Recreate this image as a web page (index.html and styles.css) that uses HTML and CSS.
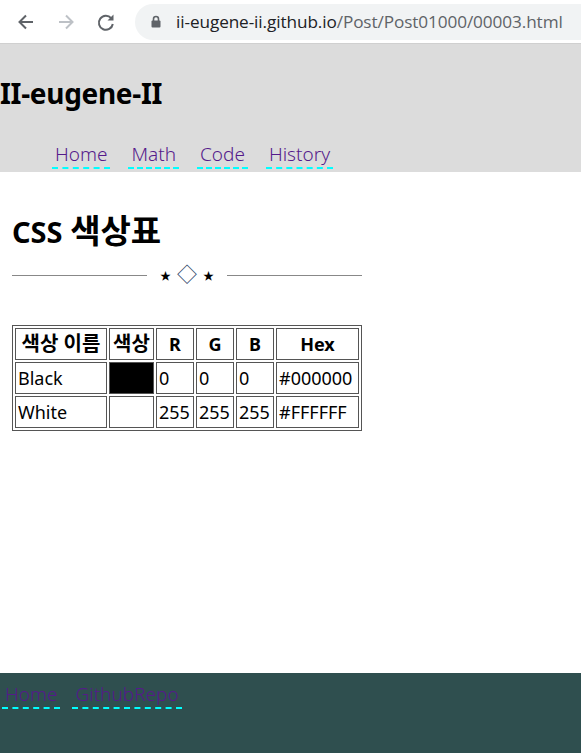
FILE: index.html
```html
<!DOCTYPE html>
<html lang="ko">
<head>
<meta charset="utf-8">
<title>CSS 색상표</title>
<link rel="stylesheet" href="styles.css">
</head>
<body>
<div class="chrome">
  <div class="nav-icons">
    <svg class="ic" width="20" height="20" viewBox="0 0 20 20"><path d="M17 10H4M10 3.5 3.5 10 10 16.5" fill="none" stroke="#5f6368" stroke-width="2"/></svg>
    <svg class="ic" width="20" height="20" viewBox="0 0 20 20"><path d="M3 10h13M10 3.5 16.5 10 10 16.5" fill="none" stroke="#bdc1c6" stroke-width="2"/></svg>
    <svg class="ic" width="20" height="20" viewBox="0 0 20 20"><path d="M15.2 6.2A7 7 0 1 0 16.8 12" fill="none" stroke="#5f6368" stroke-width="2"/><path d="M17.5 2.5v6h-6z" fill="#5f6368"/></svg>
  </div>
  <div class="omnibox">
    <svg class="lock" width="10" height="13" viewBox="0 0 10 13"><path d="M2.5 6V4a2.5 2.5 0 0 1 5 0v2" fill="none" stroke="#5f6368" stroke-width="1.6"/><rect x="0.5" y="5.5" width="9" height="7" rx="1" fill="#5f6368"/></svg>
    <span class="url"><span class="host">ii-eugene-ii.github.io</span><span class="path">/Post/Post01000/00003.html</span></span>
  </div>
</div>
<div class="page">
  <header class="site-header">
    <h1 class="site-title">II-eugene-II</h1>
    <nav class="top-nav">
      <a class="nav-link" href="#">Home</a>
      <a class="nav-link" href="#">Math</a>
      <a class="nav-link" href="#">Code</a>
      <a class="nav-link" href="#">History</a>
    </nav>
  </header>
  <main class="content">
    <h2 class="post-title">CSS <span class="ko">색상표</span></h2>
    <div class="divider">
      <span class="line"></span>
      <span class="orn"><span class="star">★</span><span class="dia">◇</span><span class="star">★</span></span>
      <span class="line"></span>
    </div>
    <table class="colors">
      <tr>
        <th class="c1"><span class="ko-th">색상 이름</span></th><th class="c2"><span class="ko-th">색상</span></th><th class="c3">R</th><th class="c3">G</th><th class="c3">B</th><th class="c6">Hex</th>
      </tr>
      <tr>
        <td>Black</td><td class="swatch-black"></td><td>0</td><td>0</td><td>0</td><td>#000000</td>
      </tr>
      <tr>
        <td>White</td><td></td><td>255</td><td>255</td><td>255</td><td>#FFFFFF</td>
      </tr>
    </table>
  </main>
  <footer class="site-footer">
    <a class="foot-link" href="#">Home</a>
    <a class="foot-link" href="#">GithubRepo</a>
  </footer>
</div>
</body>
</html>
```
FILE: styles.css
```css
html, body {
  margin: 0;
  padding: 0;
}
body {
  width: 581px;
  height: 753px;
  overflow: hidden;
  display: flex;
  flex-direction: column;
  font-family: "Noto Sans", "Noto Sans CJK KR", sans-serif;
  background: #fff;
  color: #000;
}
.chrome {
  height: 43px;
  flex: none;
  display: flex;
  align-items: center;
  background: #fff;
  border-bottom: 1px solid #d0d0d0;
  overflow: hidden;
}
.nav-icons {
  display: flex;
  gap: 20px;
  padding-left: 16px;
  width: 119px;
  flex: none;
  box-sizing: border-box;
}
.ic { display: block; }
.omnibox {
  flex: none;
  width: 480px;
  height: 36px;
  margin-left: 16px;
  border-radius: 18px;
  background: #f1f3f4;
  display: flex;
  align-items: center;
  padding-left: 16px;
  gap: 15px;
}
.lock { display: block; flex: none; }
.url {
  font-family: "Open Sans", "Noto Sans", sans-serif;
  font-size: 17.2px;
  letter-spacing: -0.1px;
  white-space: nowrap;
}
.host { color: #202124; }
.path { color: #5f6368; }
.page {
  flex: 1;
  display: flex;
  flex-direction: column;
}
.site-header {
  background: #dcdcdc;
  height: 128px;
  box-sizing: border-box;
  padding-top: 30px;
}
.site-title {
  margin: 0;
  font-size: 28px;
  line-height: 38px;
  font-weight: 700;
  letter-spacing: -0.3px;
}
.top-nav {
  display: flex;
  gap: 18px;
  padding-left: 52px;
  margin-top: 29px;
}
.nav-link, .foot-link {
  color: #551a8b;
  text-decoration: none;
  font-size: 19px;
  font-weight: 300;
  line-height: 26px;
  padding: 0 3px;
  border-bottom: 2px dashed #00ffff;
}
.content {
  flex: 1;
  padding: 0 12px;
}
.post-title {
  margin: 38px 0 0;
  font-size: 29px;
  line-height: 42px;
  font-weight: 700;
}
.ko {
  font-size: 33px;
}
.divider {
  width: 350px;
  display: flex;
  align-items: center;
  margin-top: 10px;
  height: 24px;
}
.line {
  flex: 1;
  height: 1px;
  background: #888;
}
.orn {
  width: 80px;
  display: flex;
  justify-content: center;
  align-items: center;
  gap: 6px;
  color: #000;
}
.star { font-size: 11px; }
.dia { font-size: 20px; color: #2a3f66; line-height: 1; }
.colors {
  margin-top: 38px;
  border: 1px solid #555;
  border-spacing: 2px;
  font-size: 18px;
}
.colors th, .colors td {
  border: 1px solid #555;
  padding: 1px 2px;
  height: 28px;
  line-height: 28px;
  white-space: nowrap;
}
.colors th { font-weight: 700; }
.ko-th { font-size: 20px; }
.colors td { text-align: left; }
.c1 { width: 86px; }
.c2 { width: 39px; }
.c3 { width: 32px; }
.c6 { width: 77px; }
.swatch-black { background: #000; }
.site-footer {
  flex: none;
  height: 80px;
  box-sizing: border-box;
  background: #2f4f4f;
  padding: 8px 0 0 2px;
  display: flex;
  gap: 12px;
  align-items: flex-start;
}
```
